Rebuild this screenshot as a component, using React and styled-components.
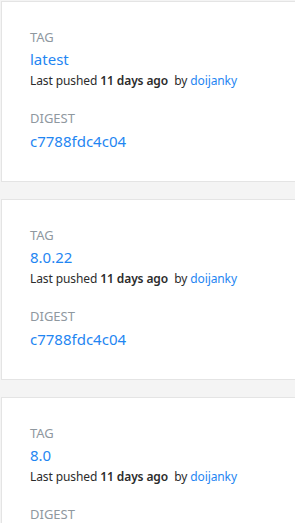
import styled, { createGlobalStyle } from "styled-components";

const GlobalStyle = createGlobalStyle`
  html, body {
    margin: 0;
    padding: 0;
    background: #f4f4f4;
    font-family: "Noto Sans", "Open Sans", sans-serif;
  }
`;

const List = styled.div`
  display: flex;
  flex-direction: column;
  gap: 17px;
  padding: 1px 0 0 1px;
  overflow: hidden;
`;

const Card = styled.section`
  display: flex;
  flex-direction: column;
  background: #fff;
  border: 1px solid #e4e4e4;
  margin-right: -12px;
  padding: 26px 28px 30px;
`;

const Label = styled.div`
  font-size: 13px;
  line-height: 18px;
  color: #8f989f;
  text-transform: uppercase;
  margin-top: ${(p) => p.$gap || 0}px;
`;

const BlueLink = styled.a`
  display: block;
  font-size: 15px;
  line-height: 20px;
  color: #1f86f2;
  text-decoration: none;
  margin-top: ${(p) => p.$gap || 0}px;
`;

const Meta = styled.div`
  font-size: 12px;
  line-height: 18px;
  letter-spacing: -0.1px;
  color: #2b2b2b;
  margin-top: 3px;
  white-space: nowrap;

  b {
    font-weight: 600;
  }
  a {
    color: #1f86f2;
    text-decoration: none;
  }
`;

const tags = [
  { name: "latest", digest: "c7788fdc4c04" },
  { name: "8.0.22", digest: "c7788fdc4c04" },
  { name: "8.0", digest: "c7788fdc4c04" },
];

function TagCard({ tag }) {
  return (
    <Card>
      <Label>Tag</Label>
      <BlueLink href="#" $gap={3}>
        {tag.name}
      </BlueLink>
      <Meta>
        Last pushed <b>11 days ago</b>&nbsp; by <a href="#">doijanky</a>
      </Meta>
      <Label $gap={19}>Digest</Label>
      <BlueLink href="#" $gap={4}>
        {tag.digest}
      </BlueLink>
    </Card>
  );
}

export default function App() {
  return (
    <>
      <GlobalStyle />
      <List>
        {tags.map((t) => (
          <TagCard key={t.name} tag={t} />
        ))}
      </List>
    </>
  );
}
